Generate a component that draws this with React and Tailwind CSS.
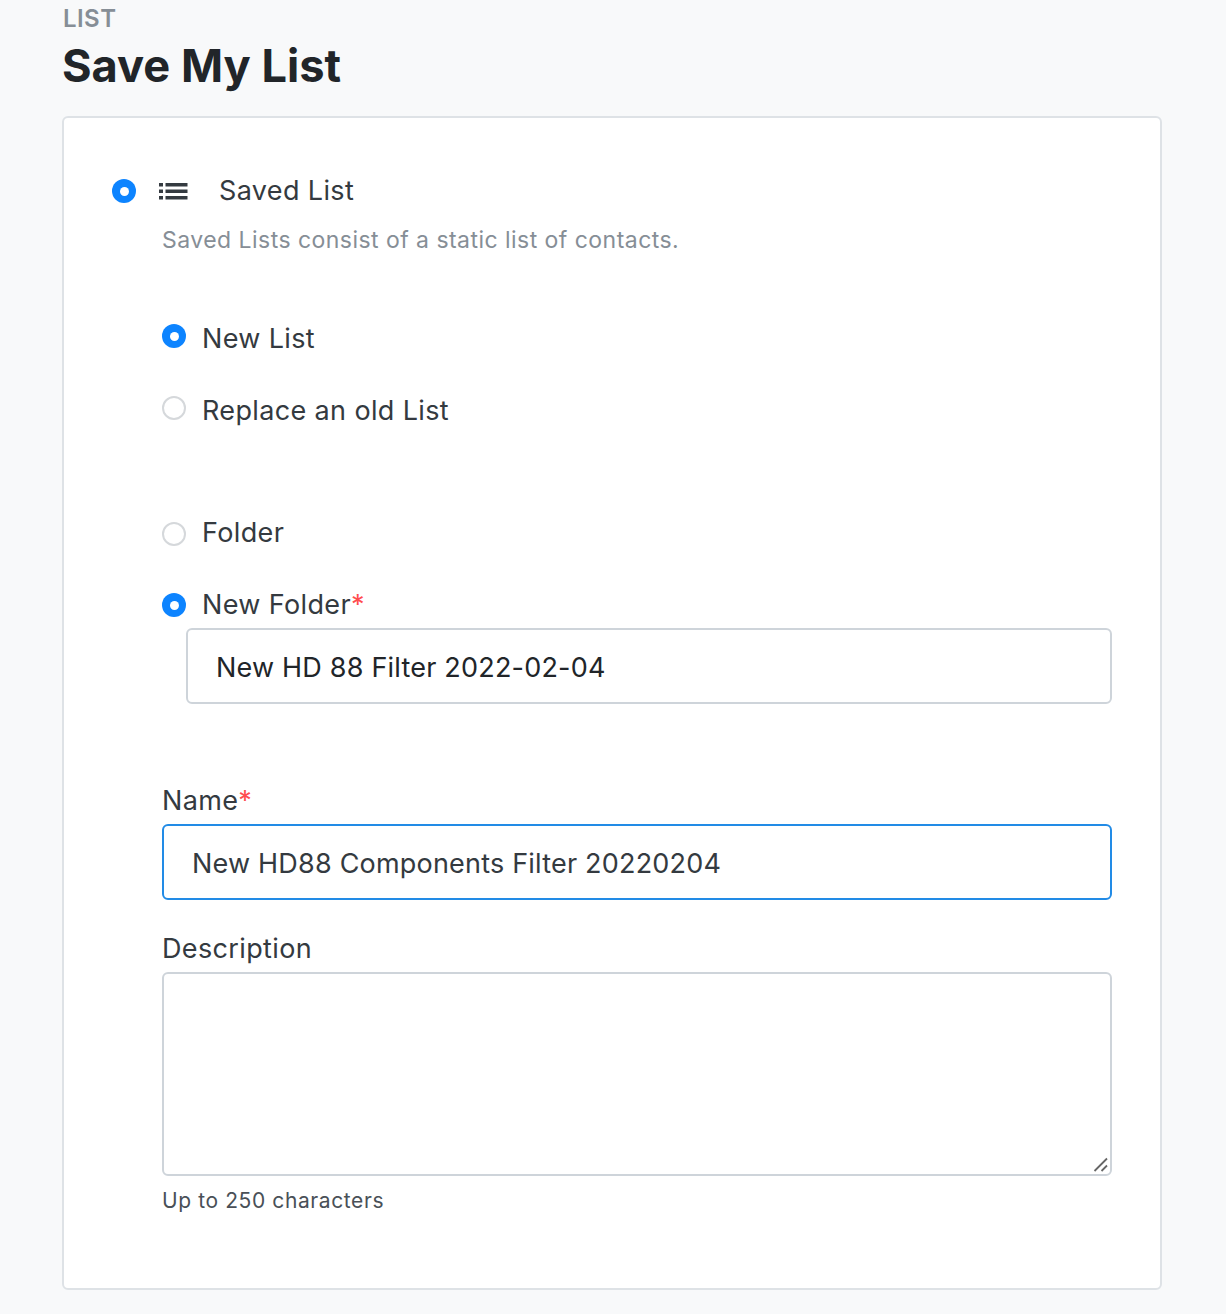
const font = { fontFamily: '"Inter", "Liberation Sans", sans-serif' };

function Radio({ on, className = "" }) {
  return on ? (
    <span className={`flex h-[24px] w-[24px] shrink-0 items-center justify-center rounded-full bg-[#0d84ff] ${className}`}>
      <span className="h-[9px] w-[9px] rounded-full bg-white" />
    </span>
  ) : (
    <span className={`block h-[24px] w-[24px] shrink-0 rounded-full border-2 border-[#d5d8db] bg-white ${className}`} />
  );
}

function Option({ on, label, required, className = "", radioClass = "" }) {
  return (
    <div className={`flex h-[32px] items-center gap-[16px] ${className}`}>
      <Radio on={on} className={radioClass} />
      <span className="text-[27px] font-[430] leading-[32px] tracking-[0.36px] text-[#343a40]">
        {label}
        {required && <span className="text-[#ff4d4f]">*</span>}
      </span>
    </div>
  );
}

export default function App() {
  return (
    <div style={font} className="h-[1314px] w-[1226px] overflow-hidden bg-[#f8f9fa] px-[62px]">
      <div className="pl-[1px] pt-[5px] text-[24px] font-semibold leading-[28px] tracking-[0.45px] text-[#868e96]">LIST</div>
      <h1 className="mt-[2px] text-[45.2px] font-bold leading-[62px] text-[#212529]">Save My List</h1>
      <div className="mt-[19px] h-[1174px] w-[1100px] rounded-[6px] border-2 border-[#dee2e6] bg-white pl-[48px] pr-[48px] pt-[59px]">
        <div className="flex h-[28px] items-center">
          <Radio on />
          <svg className="ml-[22px] h-[30px] w-[30px] text-[#343a40]" viewBox="0 0 30 30" fill="currentColor">
            <rect x="1" y="7" width="4" height="3.5" />
            <rect x="1" y="13.5" width="4" height="3.5" />
            <rect x="1" y="20" width="4" height="3.5" />
            <rect x="7.5" y="7" width="22" height="3.5" />
            <rect x="7.5" y="13.5" width="22" height="3.5" />
            <rect x="7.5" y="20" width="22" height="3.5" />
          </svg>
          <span className="ml-[31px] text-[27px] font-[430] leading-[32px] tracking-[0.36px] text-[#343a40]">Saved List</span>
        </div>
        <div className="ml-[50px]">
          <p className="mt-[20px] text-[23px] leading-[30px] tracking-[0.46px] text-[#868e96]">Saved Lists consist of a static list of contacts.</p>
          <Option on label="New List" className="mt-[68px]" radioClass="mb-[6px]" />
          <Option label="Replace an old List" className="mt-[40px]" radioClass="mb-[6px]" />
          <Option label="Folder" className="mt-[90px]" radioClass="mt-[2px]" />
          <Option on label="New Folder" required className="mt-[40px]" />
          <div className="ml-[24px] mt-[7px] flex h-[76px] items-center rounded-[6px] border-2 border-[#ced4da] bg-white px-[28px] pt-[4px] text-[27px] tracking-[0.2px] text-[#212529]">
            New HD 88 Filter 2022-02-04
          </div>
          <label className="mt-[81px] block text-[27px] font-[430] leading-[32px] tracking-[0.36px] text-[#343a40]">
            Name<span className="text-[#ff4d4f]">*</span>
          </label>
          <div className="mt-[7px] flex h-[76px] items-center rounded-[6px] border-2 border-[#228be6] bg-white px-[28px] pt-[4px] text-[27px] tracking-[0.2px] text-[#343a40]">
            New HD88 Components Filter 20220204
          </div>
          <label className="mt-[33px] block text-[27px] font-[430] leading-[32px] tracking-[0.36px] text-[#343a40]">Description</label>
          <div className="relative mt-[7px] h-[204px] rounded-[6px] border-2 border-[#ced4da] bg-white">
            <svg className="absolute bottom-[1px] right-[1px] h-[16px] w-[16px]" viewBox="0 0 16 16" stroke="#666" strokeWidth="1.8" fill="none">
              <path d="M1.5 14 L14 1.5 M8.5 14 L14 8.5" />
            </svg>
          </div>
          <p className="mt-[10px] text-[21px] leading-[30px] tracking-[0.6px] text-[#495057]">Up to 250 characters</p>
        </div>
      </div>
    </div>
  );
}
